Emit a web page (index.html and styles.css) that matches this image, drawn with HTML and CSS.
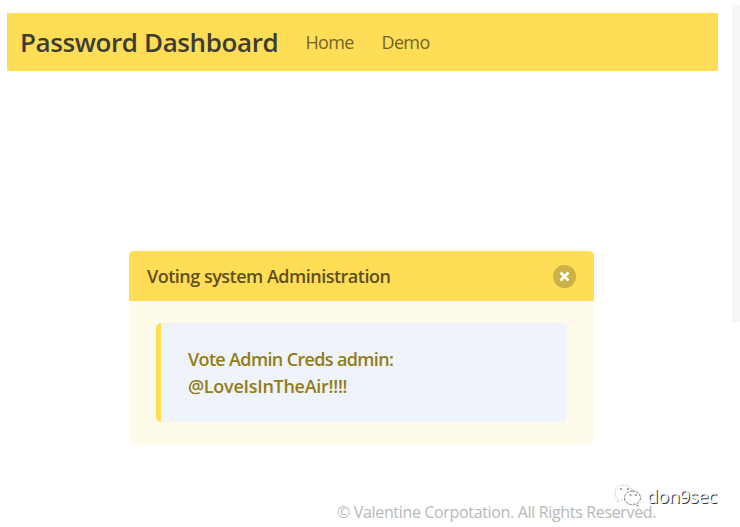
FILE: index.html
```html
<!DOCTYPE html>
<html lang="en">
<head>
<meta charset="utf-8">
<title>Password Dashboard</title>
<link rel="stylesheet" href="styles.css">
</head>
<body>
<div class="page">
  <div class="content">
    <nav class="navbar">
      <a class="brand">Password Dashboard</a>
      <a class="nav-item">Home</a>
      <a class="nav-item">Demo</a>
    </nav>
    <article class="message">
      <header class="message-header">
        <p>Voting system Administration</p>
        <svg class="close" viewBox="0 0 22 22" role="button" aria-label="Close"><circle cx="11" cy="11" r="11"/><path d="M7.2 7.2l7.6 7.6M14.8 7.2l-7.6 7.6"/></svg>
      </header>
      <div class="message-body">
        <blockquote class="quote"><p class="line-one">Vote Admin Creds admin:</p><p class="line-two">@LoveIsInTheAir!!!!</p></blockquote>
      </div>
    </article>
    <footer class="footer">© Valentine Corpotation. All Rights Reserved.</footer>
  </div>
  <div class="scrollbar"></div>
</div>
<div class="watermark">
  <svg class="chat-icon" viewBox="0 0 28 24">
    <g class="bubbles">
      <path d="M18 7C17 3 14 1 10 1C5 1 1 4 1 9C1 12 2 14 4 15L3 18L7 16L11 16"/>
      <path class="front" d="M19 7C14 7 10.500 10 10.500 14C10.500 18 14 20.500 18 20.500L21 20L24 22L23.500 19C25 18 26.500 16 26.500 14C26.500 10 23 7 19 7Z"/>
    </g>
    <path class="eyes" d="M6 5h2M13 5h2M15.500 11h2M21 11h2"/>
  </svg>
  <span>don9sec</span>
</div>
</body>
</html>
```
FILE: styles.css
```css
* { box-sizing: border-box; }
body, p, blockquote { margin: 0; }
body {
  position: relative;
  height: 527px;
  overflow: hidden;
  background: #fff;
  font-family: "Open Sans", "Noto Sans", sans-serif;
}
.page { display: flex; justify-content: space-between; height: 527px; }
.content { width: 711px; margin: 13px 0 0 7px; }
.navbar {
  display: flex;
  align-items: center;
  height: 58px;
  padding-left: 13px;
  background: #ffdd57;
  color: #736427;
  font-size: 18px;
  letter-spacing: -0.65px;
}
.brand {
  width: 285.5px;
  color: #3c3c36;
  font-size: 26px;
  font-weight: 600;
  letter-spacing: -0.4px;
  white-space: nowrap;
}
.nav-item { width: 76px; }
.message {
  width: 465px;
  height: 194px;
  margin: 180px 0 0 122px;
  overflow: hidden;
  border-radius: 5px;
  background: #fffbeb;
}
.message-header {
  display: flex;
  align-items: center;
  justify-content: space-between;
  height: 50px;
  padding: 0 18px;
  background: #ffdd57;
  color: #5e501c;
  font-size: 18px;
  font-weight: 600;
  letter-spacing: -0.5px;
}
.close { width: 23px; height: 23px; }
.close circle { fill: #ccb146; }
.close path { fill: none; stroke: #fff; stroke-width: 2.6; }
.message-body { padding: 22px 27px; }
.quote {
  height: 99px;
  padding: 23px 27px;
  border-left: 5px solid #ffdd57;
  border-radius: 5px;
  background: #eef3fc;
  color: #947c12;
  font-size: 18px;
  font-weight: 600;
  line-height: 27px;
}
.line-one { letter-spacing: -0.65px; }
.line-two { letter-spacing: -0.28px; }
.footer {
  margin: 55px 0 0 330px;
  color: #b8b8b8;
  font-size: 16px;
  line-height: 24px;
  letter-spacing: -0.34px;
  white-space: nowrap;
}
.scrollbar { width: 8px; height: 317px; margin-top: 5px; background: #f6f6f6; }
.watermark {
  position: absolute;
  left: 614px;
  top: 484px;
  display: flex;
  align-items: center;
  gap: 5px;
  color: #fff;
  font-size: 18.5px;
  line-height: 24px;
  letter-spacing: -0.4px;
  text-shadow: 1px 1px 0 #333;
}
.chat-icon { width: 28px; height: 24px; }
.bubbles { fill: #fff; stroke: #888; stroke-width: 0.7; stroke-dasharray: 1 1.2; }
.front { stroke: #444; stroke-dasharray: 3 1; }
.eyes { fill: none; stroke: #444; stroke-width: 1; }
```
